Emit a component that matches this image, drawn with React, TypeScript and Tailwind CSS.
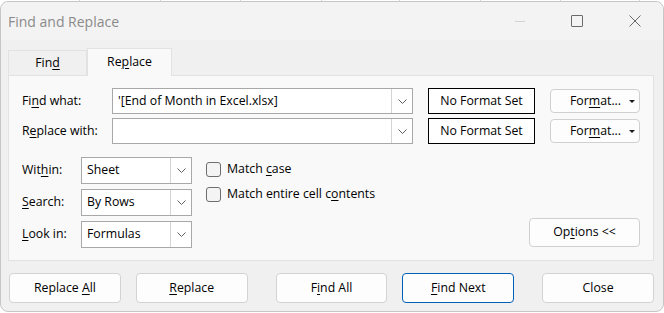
import type { ReactNode } from "react";

const Key = ({ children }: { children: ReactNode }) => (
  <span className="underline decoration-1 underline-offset-[2px]">{children}</span>
);

const Chevron = () => (
  <svg width="9" height="5" viewBox="0 0 9 5">
    <path d="M0.5 0.5 L4.5 4.5 L8.5 0.5" stroke="#606060" strokeWidth="1" fill="none" />
  </svg>
);

const Combo = ({ value }: { value?: string }) => (
  <div className="flex h-[26px] w-[301px] border border-[#a8a8a8] bg-white">
    <div className="flex flex-1 items-center pl-[5px] text-black">{value}</div>
    <div className="flex w-[21px] items-center justify-center border-l border-[#d4d4d4]">
      <Chevron />
    </div>
  </div>
);

const Select = ({ value }: { value: string }) => (
  <div className="flex h-[27px] w-[111px] border border-[#a8a8a8] bg-white">
    <div className="flex flex-1 items-center pl-[5px]">{value}</div>
    <div className="flex w-[21px] items-center justify-center border-l border-[#d4d4d4]">
      <Chevron />
    </div>
  </div>
);

const FormatButton = () => (
  <div className="ml-[15px] flex h-[24px] w-[90px] items-center rounded-[4px] border border-[#d0d0d0] bg-[#fdfdfd] pl-[19px] pr-[4px]">
    <span className="flex-1">
      For<Key>m</Key>at...
    </span>
    <svg width="6" height="3" viewBox="0 0 6 3">
      <path d="M0 0 H6 L3 3 Z" fill="#1a1a1a" />
    </svg>
  </div>
);

const NoFormat = () => (
  <div className="ml-[15px] flex h-[26px] w-[107px] items-center justify-center border border-black bg-white">
    No Format Set
  </div>
);

const Checkbox = ({ children }: { children: ReactNode }) => (
  <div className="flex h-[25px] items-center">
    <div className="h-[15px] w-[15px] rounded-[3px] border border-[#6e6e6e] bg-[#f4f4f4]" />
    <span className="ml-[6px]">{children}</span>
  </div>
);

const Button = ({
  children,
  primary,
  className = "",
}: {
  children: ReactNode;
  primary?: boolean;
  className?: string;
}) => (
  <div
    className={`flex h-[30px] w-[112px] items-center justify-center rounded-[4px] border bg-[#fdfdfd] ${
      primary ? "border-[#005fb8]" : "border-[#d3d3d3]"
    } ${className}`}
  >
    <span>{children}</span>
  </div>
);

export default function App() {
  const gridCells = [80, 81, 80, 81, 78, 81, 80, 79];

  return (
    <div className="h-[313px] w-[664px] overflow-hidden bg-white font-['Open_Sans',sans-serif] text-[12.3px] text-black">
      {/* sheet gridlines behind the dialog */}
      <div className="flex h-px">
        {gridCells.map((w, i) => (
          <div key={i} className="h-px border-r border-[#d6d6d6]" style={{ width: w }} />
        ))}
      </div>

      <div className="flex h-[311px] flex-col rounded-[8px] border border-[#c6c6c6] bg-[#f0f0f0]">
        {/* Title bar */}
        <div className="flex h-[38px] items-center rounded-t-[8px] bg-[#f3f3f3] pl-[7px]">
          <span className="flex-1 text-[14px] text-[#8a8a8a]">Find and Replace</span>
          <div className="mr-[46px] h-px w-[10px] bg-[#d2d2d2]" />
          <div className="mr-[46px] h-[12px] w-[12px] rounded-[1px] border border-[#6a6a6a]" />
          <svg width="12" height="12" viewBox="0 0 12 12" className="mr-[22px]">
            <path d="M0.5 0.5 L11.5 11.5 M11.5 0.5 L0.5 11.5" stroke="#6a6a6a" strokeWidth="1" />
          </svg>
        </div>

        <div className="flex flex-1 flex-col pl-[7px] pr-[9px] pt-[8px]">
          {/* Tabs */}
          <div className="flex h-[27px] items-end">
            <div className="flex h-[25px] w-[79px] items-center justify-center border border-b-0 border-[#e2e2e2] bg-[#f0f0f0] pt-px">
              <span>
                Fin<Key>d</Key>
              </span>
            </div>
            <div className="relative z-10 -mb-px flex h-[28px] w-[85px] items-center justify-center border border-b-0 border-[#e2e2e2] bg-[#f9f9f9]">
              <span>
                Re<Key>p</Key>lace
              </span>
            </div>
          </div>

          {/* Panel */}
          <div className="flex h-[186px] flex-col border border-[#e2e2e2] bg-[#f9f9f9] pl-[13px] pr-[13px] pt-[12px]">
            <div className="flex items-center">
              <span className="w-[90px]">
                Fi<Key>n</Key>d what:
              </span>
              <Combo value="'[End of Month in Excel.xlsx]" />
              <NoFormat />
              <FormatButton />
            </div>
            <div className="mt-[4px] flex items-center">
              <span className="w-[90px]">
                R<Key>e</Key>place with:
              </span>
              <Combo />
              <NoFormat />
              <FormatButton />
            </div>

            <div className="mt-[13px] flex">
              <div className="flex flex-col gap-[5px]">
                <div className="flex items-center">
                  <span className="w-[59px]">
                    Wit<Key>h</Key>in:
                  </span>
                  <Select value="Sheet" />
                </div>
                <div className="flex items-center">
                  <span className="w-[59px]">
                    <Key>S</Key>earch:
                  </span>
                  <Select value="By Rows" />
                </div>
                <div className="flex items-center">
                  <span className="w-[59px]">
                    <Key>L</Key>ook in:
                  </span>
                  <Select value="Formulas" />
                </div>
              </div>

              <div className="ml-[14px] flex flex-col">
                <Checkbox>
                  Match <Key>c</Key>ase
                </Checkbox>
                <Checkbox>
                  Match entire cell c<Key>o</Key>ntents
                </Checkbox>
              </div>

              <div className="flex flex-1 items-end justify-end">
                <div className="mb-px flex h-[29px] w-[111px] items-center justify-center rounded-[4px] border border-[#d0d0d0] bg-[#fdfdfd]">
                  <span>
                    Op<Key>t</Key>ions &lt;&lt;
                  </span>
                </div>
              </div>
            </div>
          </div>

          {/* Bottom buttons */}
          <div className="mt-[12px] flex pl-px">
            <Button>
              Replace <Key>A</Key>ll
            </Button>
            <Button className="ml-[15px]">
              <Key>R</Key>eplace
            </Button>
            <Button className="ml-[28px]">
              F<Key>i</Key>nd All
            </Button>
            <Button primary className="ml-[15px]">
              <Key>F</Key>ind Next
            </Button>
            <Button className="ml-[28px]">Close</Button>
          </div>
        </div>
      </div>
    </div>
  );
}
